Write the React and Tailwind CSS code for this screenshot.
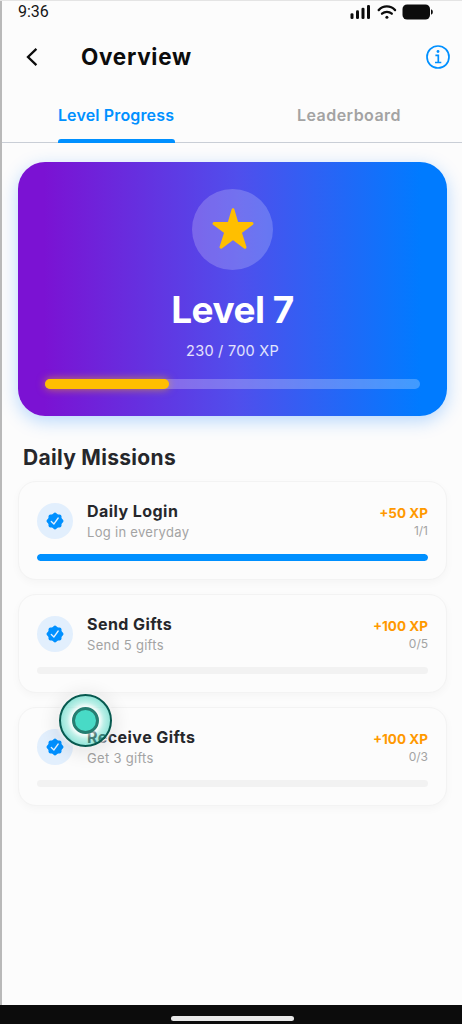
import React from "react";

const missions = [
  { title: "Daily Login", text: "Log in everyday", xp: "+50 XP", done: 1, total: 1 },
  { title: "Send Gifts", text: "Send 5 gifts", xp: "+100 XP", done: 0, total: 5 },
  { title: "Receive Gifts", text: "Get 3 gifts", xp: "+100 XP", done: 0, total: 3 },
];

function StatusBar() {
  return (
    <div className="flex h-6 items-center justify-between pl-[18px] pr-[29px]">
      <span className="font-[Roboto] text-[16px] leading-6 text-[#151515]">9:36</span>
      <div className="flex items-center text-[#0c0c0c]">
        <svg width="20" height="14" viewBox="0 0 20 14" fill="currentColor">
          <rect x="0.5" y="8.3" width="3" height="5.7" rx="1.3" />
          <rect x="6" y="5.3" width="3" height="8.7" rx="1.3" />
          <rect x="11.5" y="2.8" width="3" height="11.2" rx="1.3" />
          <rect x="17" y="0" width="3" height="14" rx="1.3" />
        </svg>
        <svg className="ml-[7px]" width="20" height="14" viewBox="0 0 20 14" fill="none" stroke="currentColor" strokeWidth="2.3" strokeLinecap="round">
          <path d="M1.7 5.1C6.2.2 13.4.2 18.1 5.1" />
          <path d="M5 8.7C7.8 6.3 12 6.3 14.8 8.7" />
          <circle cx="9.9" cy="12.3" r="1.5" fill="currentColor" stroke="none" />
        </svg>
        <svg className="ml-[5px]" width="31" height="16" viewBox="0 0 31 16" fill="currentColor">
          <rect x="0.5" y="0.5" width="27.5" height="15" rx="4.6" />
          <path d="M29 5.2q1.9.7 1.9 2.8t-1.9 2.8z" />
        </svg>
      </div>
    </div>
  );
}

function Header() {
  return (
    <div className="flex h-[66px] items-center pl-[26px] pr-3">
      <svg width="12" height="18" viewBox="0 0 12 18" fill="none" stroke="#0c0c0c" strokeWidth="2.3">
        <path d="M10.4.9 2 9l8.4 8.1" />
      </svg>
      <h1 className="ml-[43px] text-[22.5px] font-bold tracking-[0.7px] text-[#0c0c0c]">Overview</h1>
      <svg className="ml-auto" width="24" height="24" viewBox="0 0 24 24" fill="none" stroke="#0090ff" strokeWidth="1.7">
        <circle cx="12" cy="12" r="11" />
        <path d="M9.4 10.3h2.9v7.2M9 17.5h6.3" />
        <circle cx="12" cy="6.5" r="1.4" fill="#0090ff" stroke="none" />
      </svg>
    </div>
  );
}

function Tabs() {
  return (
    <div className="grid h-[53px] grid-cols-2 border-b border-[#c9ced6] text-[16px] font-semibold">
      <div className="relative flex justify-center pl-px pt-[13px] text-[#0090ff]">
        <span className="leading-6 tracking-[0.15px]">Level Progress</span>
        <div className="absolute -bottom-px left-[58px] h-[4px] w-[117px] rounded-t-[3px] bg-[#0090ff]" />
      </div>
      <div className="flex justify-center pl-[5px] pt-[13px] text-[#a3a3a3]">
        <span className="leading-6 tracking-[0.45px]">Leaderboard</span>
      </div>
    </div>
  );
}

function LevelCard() {
  return (
    <div className="mx-[15px] ml-[18px] mt-[18.5px] flex h-[254px] flex-col items-center rounded-[27px] bg-[linear-gradient(90deg,#7b12d3_0%,#7b12d3_6%,#504eec_51%,#007bff_94%,#007bff_100%)] px-[27px] pt-[27px] shadow-[0_5px_18px_rgba(0,123,255,0.28)]">
      <div className="flex size-[81px] items-center justify-center rounded-full bg-white/20">
        <svg width="44" height="44" viewBox="0 0 44 44" fill="#ffbf00" stroke="#ffbf00" strokeWidth="3" strokeLinejoin="round">
          <path d="M22 2.8 26 16.6 41 16.6 29.2 25.3 34 40.2 22 31.2 10 40.2 14.8 25.3 3 16.6 18 16.6Z" />
        </svg>
      </div>
      <div className="mt-[15px] text-[37px] font-bold leading-[50px] tracking-[-0.5px] text-white">Level 7</div>
      <div className="mt-[5.5px] text-[14.5px] leading-[22px] tracking-[0.25px] text-white/85">230 / 700 XP</div>
      <div className="mt-[17px] h-[10px] w-full rounded-full bg-white/25">
        <div className="h-full w-[33%] rounded-full bg-[#ffbf00] shadow-[0_0_8px_rgba(255,191,0,0.6)]" />
      </div>
    </div>
  );
}

function Badge() {
  return (
    <svg width="18" height="18" viewBox="0 0 18 18">
      <rect x="2.5" y="2.5" width="13" height="13" rx="2" fill="#0090ff" />
      <rect x="2.5" y="2.5" width="13" height="13" rx="2" fill="#0090ff" transform="rotate(45 9 9)" />
      <path d="M5.3 9.5 7.9 12 12.2 6" fill="none" stroke="#e4f0fd" strokeWidth="1.3" strokeLinecap="round" />
    </svg>
  );
}

function MissionCard({ mission }) {
  return (
    <div className="h-[99px] rounded-[18px] border border-[#f3f3f3] bg-[#fcfcfc] px-[18px] pt-[21px] shadow-[0_3px_9px_rgba(0,0,0,0.03)]">
      <div className="flex h-9">
        <div className="flex size-9 items-center justify-center rounded-full bg-[#e2effd]">
          <Badge />
        </div>
        <div className="ml-[14px] flex-1">
          <div className="mt-[-3px] text-[16px] font-bold leading-[22px] tracking-[0.45px] text-[#26272b]">{mission.title}</div>
          <div className="text-[13px] leading-[20px] tracking-[0.3px] text-[#a3a3a3]">{mission.text}</div>
        </div>
        <div className="mt-[-0.5px] text-right">
          <div className="text-[13.5px] font-bold leading-[20px] text-[#ff9900]">{mission.xp}</div>
          <div className="text-[12px] leading-[16px] text-[#a3a3a3]">{mission.done}/{mission.total}</div>
        </div>
      </div>
      <div className="mt-[15px] h-[7px] overflow-hidden rounded-full bg-[#f2f2f2]">
        <div className="h-full rounded-full bg-[#0090ff]" style={{ width: `${(mission.done / mission.total) * 100}%` }} />
      </div>
    </div>
  );
}

export default function App() {
  return (
    <div className="relative flex h-[1024px] w-[462px] flex-col overflow-hidden bg-[#fcfcfc] font-[Inter,sans-serif]">
      <StatusBar />
      <Header />
      <Tabs />
      <LevelCard />
      <h2 className="ml-[23px] mt-[27px] text-[21px] font-bold leading-[30px] tracking-[0.3px] text-[#26272b]">Daily Missions</h2>
      <div className="ml-[18px] mr-[15px] mt-[8.5px] flex flex-col gap-[14px]">
        {missions.map((mission) => (
          <MissionCard key={mission.title} mission={mission} />
        ))}
      </div>
      {/* Home indicator */}
      <div className="mt-auto flex h-[19px] justify-center bg-[#0c0c0c] pt-[11px]">
        <div className="ml-[3px] h-[5px] w-[123px] rounded-full bg-[#e8e8e8]" />
      </div>
      {/* Screen edges */}
      <div className="absolute left-0 top-0 h-[1005px] w-[1.5px] bg-[#b9b9b9]" />
      <div className="absolute left-0 top-0 h-px w-full bg-[#e4e4e4]" />
      {/* Touch pointer */}
      <div className="absolute left-[59px] top-[694px] flex size-[53px] items-center justify-center rounded-full border-2 border-[#07594f] bg-[radial-gradient(closest-side,rgba(255,255,255,0.4)_52%,rgba(110,225,207,0.45)_75%,rgba(64,210,188,0.55)_100%)] shadow-[0_3px_18px_4px_rgba(0,0,0,0.09),0_0_3px_2px_rgba(255,255,255,0.9)]">
        <div className="size-[27px] rounded-full border-[3px] border-[#257d71] bg-[#48dac6] shadow-[0_0_4px_1px_rgba(255,255,255,0.6)]" />
      </div>
    </div>
  );
}
